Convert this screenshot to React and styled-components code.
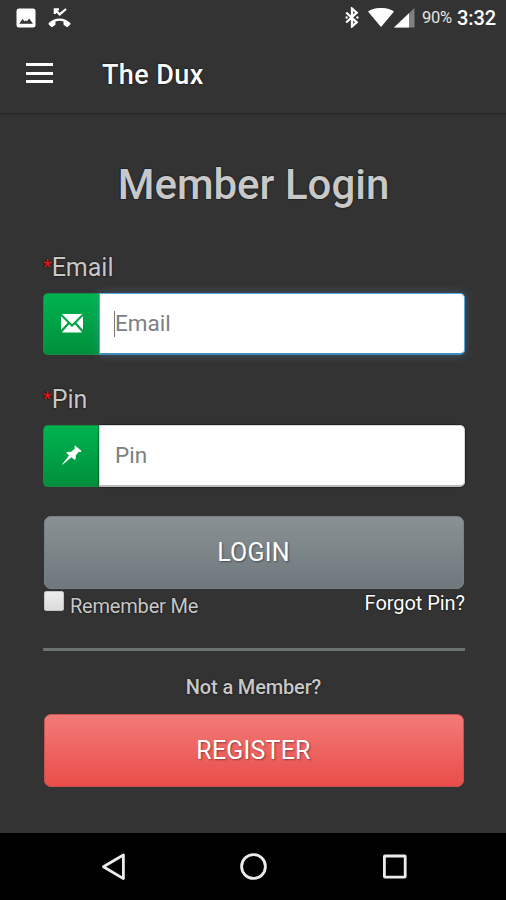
import React, { useState } from "react";
import styled, { createGlobalStyle } from "styled-components";

const App = () => {
  const [email, setEmail] = useState("");
  const [pin, setPin] = useState("");
  const [focused, setFocused] = useState("email");

  return (
    <Screen>
      <GlobalStyle />
      <StatusBar>
        <StatusGroup>
          <svg width="20" height="20" viewBox="0 0 20 20">
            <rect x="0.5" y="0.5" width="19" height="19" rx="2.5" fill="#fff" />
            <path d="M3.3 15.7l3.2-4.7 2.2 2.6 1.2-1.4 1 1.2 2.2-2.8 3.9 5.1z" fill="#333" />
          </svg>
          <svg width="23" height="20" viewBox="0 0 23 20">
            <path
              d="M6.8 6V1.3H11M6.8 1.5l4.9 4.9L18 1"
              fill="none"
              stroke="#fff"
              strokeWidth="2.2"
            />
            <path
              d="M0.7 15.1C3.4 12.2 7.2 10.5 11.5 10.5s8.1 1.7 10.8 4.6c.4.4.4.9 0 1.3l-2.4 2.4c-.4.4-.9.4-1.3.1-.8-.8-1.6-1.3-2.5-1.7-.4-.2-.6-.5-.6-.9v-2.8a13 13 0 0 0-8 0v2.8c0 .4-.2.8-.6.9-.9.4-1.7 1-2.5 1.7-.4.3-.9.3-1.3-.1L.7 16.4c-.4-.4-.4-.9 0-1.3z"
              fill="#fff"
            />
          </svg>
        </StatusGroup>
        <StatusGroup $end>
          <svg width="14" height="21" viewBox="0 0 14 21">
            <path
              d="M1.2 5.5l10.5 9.8L7 19.4V1.6l4.7 4.1L1.2 15.5"
              fill="none"
              stroke="#fff"
              strokeWidth="2.3"
            />
            <circle cx="1.6" cy="10.5" r="1.2" fill="#fff" />
            <circle cx="12.4" cy="10.5" r="1.2" fill="#fff" />
          </svg>
          <svg width="26" height="20" viewBox="0 0 26 20">
            <path d="M0 3.4C7-1.2 19-1.2 26 3.4L13 19z" fill="#fff" />
          </svg>
          <svg width="21" height="20" viewBox="0 0 21 20">
            <path d="M0 19.5L20.5 0v19.5z" fill="#808080" />
            <path d="M0 19.5L15 5.2V19.5z" fill="#fff" />
          </svg>
          <Battery>90%</Battery>
          <Clock>3:32</Clock>
        </StatusGroup>
      </StatusBar>

      <AppBar>
        <MenuButton aria-label="menu">
          <MenuLine />
          <MenuLine />
          <MenuLine />
        </MenuButton>
        <AppTitle>The Dux</AppTitle>
      </AppBar>

      <Content>
        <Heading>Member Login</Heading>

        <Label htmlFor="email">
          <Required>*</Required>Email
        </Label>
        <InputGroup>
          <Addon>
            <svg width="22" height="19" viewBox="0 0 22 19">
              <path d="M0.8 0h20.4L11 10.2z" fill="#fff" />
              <path d="M0 2l6.6 6.8L0 16zM22 2l-6.6 6.8L22 16z" fill="#fff" />
              <path d="M0.8 18.4l7.3-8.1L11 13l2.9-2.7 7.3 8.1z" fill="#fff" />
            </svg>
          </Addon>
          <Field>
            <Input
              id="email"
              placeholder="Email"
              value={email}
              $focused={focused === "email"}
              onFocus={() => setFocused("email")}
              onChange={(e) => setEmail(e.target.value)}
            />
            {focused === "email" && !email && <Caret />}
          </Field>
        </InputGroup>

        <Label htmlFor="pin">
          <Required>*</Required>Pin
        </Label>
        <InputGroup>
          <Addon>
            <svg width="20" height="20" viewBox="0 0 20 20">
              <path
                d="M13.2 0.6L19.6 6c-.6 1.2-1.6 1.3-2.9.7l-3.1 4c.6 1.6.3 3-.8 4.2l-3.3-2.6L.5 19.7l-.4-.4 7-8.9-3-2.6c1.3-1.2 2.9-1.3 4.6-.7l4.2-3.4c-.6-1.1-.5-2.3.3-3.1z"
                fill="#fff"
              />
            </svg>
          </Addon>
          <Field>
            <Input
              id="pin"
              placeholder="Pin"
              value={pin}
              $focused={focused === "pin"}
              onFocus={() => setFocused("pin")}
              onChange={(e) => setPin(e.target.value)}
            />
          </Field>
        </InputGroup>

        <Button>LOGIN</Button>
        <Options>
          <Remember>
            <Checkbox type="checkbox" />
            <RememberText>Remember Me</RememberText>
          </Remember>
          <ForgotLink href="#">Forgot Pin?</ForgotLink>
        </Options>

        <Divider />
        <Question>Not a Member?</Question>
        <Button $danger>REGISTER</Button>
      </Content>

      <NavBar>
        <svg width="24" height="28" viewBox="0 0 24 28">
          <path
            d="M22.4 2v23.6L2.4 13.8z"
            fill="none"
            stroke="#ececec"
            strokeWidth="2.8"
            strokeLinejoin="round"
          />
        </svg>
        <svg width="28" height="28" viewBox="0 0 28 28">
          <circle cx="13.5" cy="13.5" r="11.9" fill="none" stroke="#ececec" strokeWidth="2.8" />
        </svg>
        <svg width="24" height="28" viewBox="0 0 24 28">
          <rect
            x="1.4"
            y="3"
            width="20.8"
            height="21.2"
            rx="0.6"
            fill="none"
            stroke="#ececec"
            strokeWidth="2.8"
          />
        </svg>
      </NavBar>
    </Screen>
  );
};

export default App;

const GlobalStyle = createGlobalStyle`
  * {
    box-sizing: border-box;
  }

  body {
    margin: 0;
    background-color: #333;
    font-family: Roboto, "Liberation Sans", sans-serif;
  }
`;

const Screen = styled.div`
  width: 506px;
  height: 900px;
  display: flex;
  flex-direction: column;
  overflow: hidden;
  background-color: #333;
  color: #c8c8c8;
`;

const StatusBar = styled.div`
  height: 35px;
  padding: 0 11px 0 16px;
  display: flex;
  justify-content: space-between;
  align-items: center;
  color: #fff;
`;

const StatusGroup = styled.div`
  display: flex;
  align-items: center;
  gap: ${(props) => (props.$end ? "0" : "12px")};

  svg:first-child {
    margin-right: ${(props) => (props.$end ? "9px" : "0")};
  }

  svg {
    flex: none;
  }
`;

const Battery = styled.span`
  margin-left: 7px;
  width: 32px;
  font-size: 16.5px;
  letter-spacing: -0.3px;
  color: #e4e4e4;
`;

const Clock = styled.span`
  margin-left: 3px;
  width: 38px;
  font-size: 20px;
  font-weight: 500;
  letter-spacing: -0.1px;
`;

const AppBar = styled.header`
  height: 80px;
  padding-left: 26px;
  display: flex;
  align-items: center;
  border-bottom: 2px solid #2b2b2b;
`;

const MenuButton = styled.button`
  width: 28px;
  height: 20px;
  margin: 0 48px 2px 0;
  padding: 0;
  display: flex;
  flex-direction: column;
  justify-content: space-between;
  border: 0;
  background: none;
`;

const MenuLine = styled.span`
  width: 27px;
  height: 3px;
  background-color: #fff;
`;

const AppTitle = styled.div`
  padding-top: 2px;
  font-size: 27px;
  font-weight: 500;
  letter-spacing: 0.4px;
  color: #fff;
  text-shadow: 0 0 2px #000;
`;

const Content = styled.main`
  flex: 1;
  padding: 45px 41px 0 43px;
  display: flex;
  flex-direction: column;
`;

const Heading = styled.h1`
  margin: 0 0 31px;
  padding-right: 1px;
  font-size: 42px;
  line-height: 50px;
  font-weight: 500;
  text-align: center;
  text-shadow: 0 0 2px #000;
`;

const Label = styled.label`
  height: 52px;
  font-size: 25px;
  line-height: 54px;
  text-shadow: 0 0 2px #000;
`;

const Required = styled.span`
  position: relative;
  top: -2px;
  font-size: 20px;
  color: #e81717;
`;

const InputGroup = styled.div`
  height: 62px;
  margin-bottom: 18px;
  display: flex;
  border-radius: 5px;
`;

const Addon = styled.span`
  width: 56px;
  padding: 0 0 2px 0;
  display: flex;
  justify-content: center;
  align-items: center;
  border-radius: 5px 0 0 5px;
  background-image: linear-gradient(#00b350, #00903c);
  border: 1px solid #188a45;
  border-right: 0;
`;

const Field = styled.div`
  flex: 1;
  display: flex;
  position: relative;
`;

const Input = styled.input`
  width: 100%;
  padding: 0 15px 2px;
  border: 1px solid ${(props) => (props.$focused ? "#58a9de" : "#d8d8d8")};
  border-bottom: 2px solid ${(props) => (props.$focused ? "#3f8cbf" : "#bbb")};
  border-radius: 0 5px 5px 0;
  outline: 0;
  background-color: #fff;
  font-family: inherit;
  font-size: 22.5px;
  color: #555;
  box-shadow: ${(props) =>
    props.$focused ? "0 0 10px rgba(90, 160, 205, 0.35)" : "0 0 2px #000"};

  &::placeholder {
    color: #7c8083;
    opacity: 1;
  }
`;

const Caret = styled.span`
  position: absolute;
  left: 15px;
  top: 18px;
  width: 1px;
  height: 26px;
  background-color: #777;
`;

const Button = styled.button`
  width: 420px;
  height: 73px;
  flex: none;
  margin: ${(props) => (props.$danger ? "0" : "11px")} 0 0 0.5px;
  padding: 0;
  border: 1px solid ${(props) => (props.$danger ? "#c9504e" : "#768084")};
  border-radius: 7px;
  background-image: ${(props) =>
    props.$danger
      ? "linear-gradient(#f27a78, #ea4d49)"
      : "linear-gradient(#899194, #6f787d)"};
  font-family: inherit;
  font-size: 25px;
  letter-spacing: 0.2px;
  color: #fff;
  text-shadow: 1px 1px 2px rgba(0, 0, 0, 0.4);
`;

const Options = styled.div`
  height: 59px;
  display: flex;
  justify-content: space-between;
  align-items: flex-start;
`;

const Remember = styled.label`
  display: flex;
  align-items: flex-start;
`;

const Checkbox = styled.input`
  appearance: none;
  width: 20px;
  height: 20px;
  margin: 2px 6px 0 1px;
  border: 1px solid #c4c4c4;
  border-radius: 2px;
  background-image: linear-gradient(#ececec, #dcdcdc);

  &:checked {
    background: #188a45;
  }
`;

const RememberText = styled.span`
  font-size: 20px;
  line-height: 34px;
  letter-spacing: -0.2px;
  text-shadow: 0 0 2px #000;
`;

const ForgotLink = styled.a`
  font-size: 20px;
  line-height: 28px;
  letter-spacing: -0.05px;
  color: #fff;
  text-decoration: none;
  text-shadow: 0 0 2px #000;
`;

const Divider = styled.hr`
  width: 100%;
  height: 3px;
  margin: 0;
  border: 0;
  background-color: #6e7271;
`;

const Question = styled.div`
  height: 63px;
  padding-right: 1px;
  font-size: 20px;
  font-weight: 500;
  line-height: 72px;
  letter-spacing: -0.15px;
  text-align: center;
  text-shadow: 0 0 2px #000;
`;

const NavBar = styled.nav`
  height: 67px;
  padding: 0 99px 0 101px;
  display: flex;
  justify-content: space-between;
  align-items: center;
  background-color: #000;
`;
